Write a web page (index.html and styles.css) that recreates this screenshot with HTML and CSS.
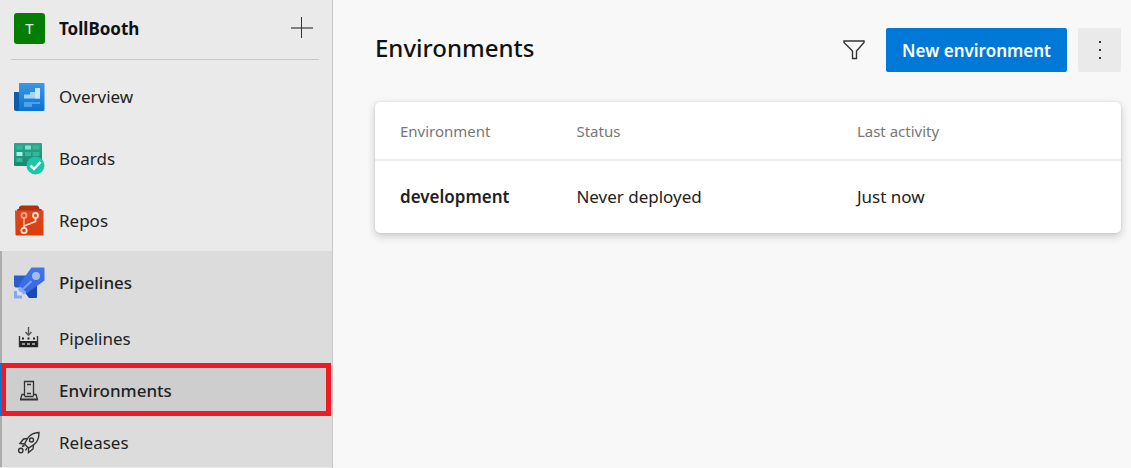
FILE: index.html
```html
<!DOCTYPE html>
<html lang="en">
<head>
<meta charset="utf-8">
<title>Environments - TollBooth</title>
<link rel="stylesheet" href="styles.css">
</head>
<body>
<div class="app">
  <aside class="sidebar">
    <header class="project">
      <span class="project-badge">T</span>
      <a class="project-name" href="#">TollBooth</a>
      <button class="add-button" type="button" aria-label="Add">
        <svg width="22" height="22" viewBox="0 0 22 22"><path d="M0 11h22" stroke="#808080" stroke-width="2"/><path d="M10.500 0v21" stroke="#333" stroke-width="1"/></svg>
      </button>
    </header>
    <nav class="nav">
      <a class="nav-item" href="#">
        <svg class="nav-icon" viewBox="0 0 32 32">
          <defs><linearGradient id="ov" x2="0" y2="1"><stop stop-color="#3c97e4"/><stop offset="1" stop-color="#0873d3"/></linearGradient></defs>
          <path d="M1 11h6v19H3a2 2 0 0 1-2-2z" fill="#0f5ca8"/>
          <path d="M6 2h24.500a1 1 0 0 1 1 1v25.500a1.500 1.500 0 0 1-1.500 1.500H4.500C6 29.500 6 28 6 26z" fill="url(#ov)"/>
          <path d="M11 17.500v-4h6v-2.500h5V7h5v10.500z" fill="#a5d5fb"/><path d="M22 7h5v10.500h-5z" fill="#c9e6fd"/>
          <path d="M11 21h16v2h-8v3h-8z" fill="#4aa2ea"/>
        </svg>
        <span>Overview</span>
      </a>
      <a class="nav-item" href="#">
        <svg class="nav-icon" viewBox="0 0 32 32">
          <defs><linearGradient id="bo" x2="0" y2="1"><stop stop-color="#2fa58c"/><stop offset="1" stop-color="#1d8671"/></linearGradient></defs>
          <rect x="1" y="0" width="28" height="23" rx="1" fill="url(#bo)"/>
          <path d="M3.500 2.500h6v4h-6zM19.500 2.500h7v4h-7zM12 9h6v4h-6zM19.500 9h7v4h-7zM3.500 15h6v4h-6z" fill="#33b89c"/>
          <path d="M12 2.500h6v4h-6z" fill="#76ead3"/><path d="M3.500 9h6v4h-6z" fill="#9df7e5"/>
          <circle cx="22.500" cy="22.500" r="9" fill="#18c7a8"/>
          <path d="M17.500 22.500l3.500 3.500 6.500-7" fill="none" stroke="#fff" stroke-width="2.500"/>
        </svg>
        <span>Boards</span>
      </a>
      <a class="nav-item" href="#">
        <svg class="nav-icon" viewBox="0 0 32 32">
          <defs><linearGradient id="re" x2="0" y2="1"><stop stop-color="#d84a22"/><stop offset="1" stop-color="#dd3c08"/></linearGradient></defs>
          <path d="M8 .5h16.500l1.500 1.500v1.500l3 1v4H4v-4l2-1V2z" fill="#b2310d"/>
          <path d="M2 5.500h28.500v25H3.500a1 1 0 0 1-1-1z" fill="url(#re)"/>
          <g fill="none" stroke="#ff9f7d" stroke-width="1.800"><circle cx="11" cy="10.500" r="2.500"/><path d="M11 13v10"/></g>
          <g fill="none" stroke="#ffe0d5" stroke-width="1.800"><circle cx="22.500" cy="10.500" r="2.500"/><circle cx="11" cy="25.500" r="2.700"/><path d="M22.500 13v3.500L11 21v2"/></g>
        </svg>
        <span>Repos</span>
      </a>
      <section class="nav-group">
        <a class="nav-item nav-item-open" href="#">
          <svg class="nav-icon" viewBox="0 0 32 32">
            <defs><linearGradient id="pi" x2="0" y2="1"><stop stop-color="#4377e8"/><stop offset="1" stop-color="#3367dc"/></linearGradient></defs>
            <path d="M1 8.500h15l-8 12H2.500L1 19z" fill="#2a5dc9"/>
            <path d="M12 22l12-9v17a1 1 0 0 1-1 1h-7l-3-4z" fill="#1a48b6"/>
            <path d="M18.500 .5H30.500a1 1 0 0 1 1 1v12L13.500 26.500l-8-8z" fill="url(#pi)"/>
            <circle cx="23" cy="9" r="4" fill="#a3bcf8"/>
            <path d="M9 23L18.500 14" stroke="#77a0f7" stroke-width="2"/>
            <path d="M7 20l2 .5 1 2.500 2.500 1 .5 2.500-3 1-1-2-2.500-1-1.500-2z" fill="#82a9f9"/>
            <path d="M1 24h3v4.500h5v3H1z" fill="#82a9f9"/>
          </svg>
          <span>Pipelines</span>
        </a>
        <div class="subnav">
          <a class="subnav-item" href="#">
            <svg class="subnav-icon" viewBox="0 0 24 24">
              <path d="M11.500 0v8M8.500 5l3 3.200 3-3.200" fill="none" stroke="#555" stroke-width="1.400"/>
              <path d="M2.500 9v10.500h18V9" fill="none" stroke="#333" stroke-width="1.400"/>
              <path d="M3 14h17v6H3zM5 10.500h2v2H5zM10.500 10.500h2v2h-2zM16 10.500h2v2h-2z" fill="#222"/>
              <path d="M5 16h3v2H5zM10 16h3v2h-3zM15 16h3v2h-3z" fill="#999"/>
            </svg>
            <span>Pipelines</span>
          </a>
          <a class="subnav-item subnav-item-current" href="#" aria-current="page">
            <svg class="subnav-icon" viewBox="0 0 24 24">
              <g fill="none" stroke="#333" stroke-width="1.300"><path d="M7.500 17V2.500h9V17M3.500 20.500l1.500-5h2.500M16.500 15.500H19l1.500 5M7.500 17.500h9M10 5.500h4M10 14.500h4"/><path d="M3 20.500h18" stroke-width="2"/></g>
            </svg>
            <span>Environments</span>
          </a>
          <a class="subnav-item" href="#">
            <svg class="subnav-icon" viewBox="0 0 24 24">
              <g fill="none" stroke="#333" stroke-width="1.400"><path d="M22 1.500c-5.500.2-9 2-11.500 6L7.500 13l4 4 5-3.200C20.500 11.500 22 7 22 1.500z"/><circle cx="14.500" cy="9" r="2"/><path d="M10.500 7.500L6.500 8 3 12.500l4.500.5M16.500 14l-.5 4-4.500 3.500V17"/><path d="M5 15.500l2.500-1M8.500 19.500l1.500-2.500"/><circle cx="3.800" cy="19.500" r="2.200"/></g>
            </svg>
            <span>Releases</span>
          </a>
        </div>
      </section>
    </nav>
  </aside>
  <main class="content">
    <header class="page-header">
      <h1 class="page-title">Environments</h1>
      <button class="filter-button" type="button" aria-label="Filter">
        <svg width="22" height="22" viewBox="0 0 22 22"><path d="M1 2h20v1.500L13.500 12v7.500h-4V12L1 3.500z" fill="none" stroke="#333" stroke-width="1.400"/></svg>
      </button>
      <button class="primary-button" type="button">New environment</button>
      <button class="more-button" type="button" aria-label="More options">
        <svg width="4" height="20" viewBox="0 0 4 20"><path d="M1 1h2v2H1zM1 9h2v2H1zM1 17h2v2H1z" fill="#333"/></svg>
      </button>
    </header>
    <div class="card">
      <table class="env-table">
        <thead><tr><th class="col-name" scope="col">Environment</th><th class="col-status" scope="col">Status</th><th scope="col">Last activity</th></tr></thead>
        <tbody><tr><td class="env-name">development</td><td>Never deployed</td><td>Just now</td></tr></tbody>
      </table>
    </div>
  </main>
</div>
</body>
</html>
```
FILE: styles.css
```css
* { box-sizing: border-box; }
body {
  margin: 0;
  font: 17px/24px "Noto Sans", "Open Sans", sans-serif;
  color: #222;
  background: #f8f8f8;
}
a { color: inherit; text-decoration: none; }
button { border: 0; padding: 0; font: inherit; cursor: pointer; }
svg { display: block; }
.app { display: flex; min-height: 100vh; }
.sidebar {
  flex: 0 0 333px;
  background: #eaeaea;
  border-right: 1px solid #c8c8c8;
}
.project {
  display: flex;
  align-items: center;
  height: 60px;
  margin: 0 13px 0 11px;
  padding: 0 6px 3px 3px;
  border-bottom: 1px solid #c8c8c8;
}
.project-badge {
  width: 31px;
  height: 31px;
  border-radius: 3px;
  background: #047d04;
  color: #e4f3e4;
  font-size: 15px;
  line-height: 31px;
  text-align: center;
}
.project-name { margin-left: 14px; padding-top: 2px; font-weight: 700; color: #111; }
.add-button { margin-left: auto; background: none; }
.nav { padding-top: 5px; }
.nav-item { display: flex; align-items: center; gap: 14px; height: 62px; padding: 1px 0 0 13px; }
.nav-icon { width: 32px; height: 32px; }
.nav-group { background: #dcdcdc; border-left: 2px solid #acacac; }
.nav-item-open { padding-left: 11px; font-weight: 500; }
.subnav { display: flex; flex-direction: column; gap: 2px; }
.subnav-item { display: flex; align-items: center; gap: 18px; height: 50px; padding: 1px 0 0 15px; }
.subnav-icon { width: 24px; height: 24px; }
.subnav-item-current {
  position: relative;
  background: #cecece;
  font-weight: 500;
}
.subnav-item-current::before {
  content: "";
  position: absolute;
  inset: -2px 1px -1px -1px;
  border: 5px solid #ed1c24;
}
.subnav-item-current::after {
  content: "";
  position: absolute;
  inset: -2px auto -1px -2px;
  width: 2px;
  background: #0078d7;
}
.content { flex: 1; min-width: 0; padding: 28px 10px 0 42px; }
.page-header { display: flex; align-items: center; height: 44px; }
.page-title { margin: 0 auto 4px 0; font-size: 24px; line-height: 32px; font-weight: 500; color: #111; }
.filter-button { margin-right: 21px; background: none; }
.primary-button {
  height: 44px;
  padding: 2px 16px 0;
  border-radius: 2px;
  background: #0078d7;
  color: #fff;
  font-weight: 600;
}
.more-button {
  display: grid;
  place-items: center;
  width: 43px;
  height: 44px;
  margin-left: 11px;
  border-radius: 2px;
  background: #eaeaea;
}
.card {
  margin-top: 30px;
  border-radius: 5px;
  background: #fff;
  box-shadow: 0 3px 8px rgba(0, 0, 0, .2), 0 0 2px rgba(0, 0, 0, .12);
}
.env-table { width: 100%; border-collapse: collapse; table-layout: fixed; text-align: left; }
.env-table th {
  height: 58px;
  padding: 0;
  border-bottom: 2px solid #eee;
  font-size: 15px;
  font-weight: 400;
  color: #777;
}
.env-table td { height: 73px; padding: 0; }
.env-table th:first-child, .env-table td:first-child { padding-left: 25px; }
.col-name { width: 27%; }
.col-status { width: 37.6%; }
.env-table .env-name { font-weight: 600; }
```
